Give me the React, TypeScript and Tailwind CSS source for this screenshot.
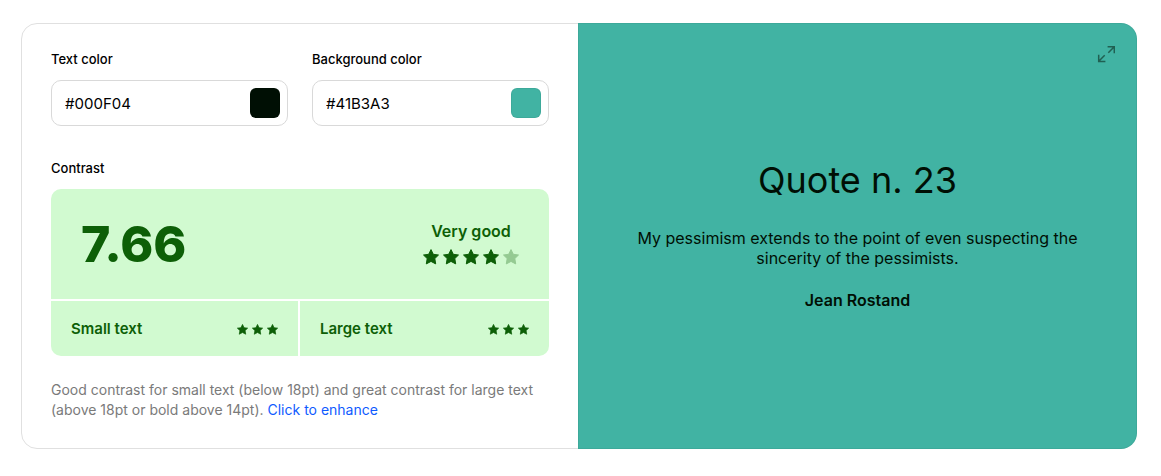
import { useState } from "react";

type ColorFieldProps = {
  id: string;
  label: string;
  value: string;
  onChange: (value: string) => void;
};

function ColorField({ id, label, value, onChange }: ColorFieldProps) {
  return (
    <div className="min-w-0 flex-1">
      <label htmlFor={id} className="block text-[13px] leading-4 font-medium text-black">
        {label}
      </label>
      <div className="mt-[13px] flex h-[46px] items-center rounded-[10px] border border-[#d9d9d9] bg-white pr-[7px] pl-[13px]">
        <input
          id={id}
          type="text"
          value={value}
          onChange={(event) => onChange(event.target.value)}
          className="min-w-0 flex-1 bg-transparent pt-0.5 text-[15px] leading-5 text-black outline-none"
        />
        <button
          type="button"
          aria-label={`Pick ${label.toLowerCase()}`}
          className="size-[30px] shrink-0 rounded-md border border-black/5"
          style={{ backgroundColor: value }}
        />
      </div>
    </div>
  );
}

function Star({ className }: { className: string }) {
  return (
    <svg viewBox="0 0 16 16" fill="currentColor" aria-hidden="true" className={className}>
      <path
        d="M8 .6 10.3 5.3 15.5 6 11.8 9.6 12.7 14.9 8 12.4 3.3 14.9 4.2 9.6.5 6 5.7 5.3Z"
        stroke="currentColor"
        strokeWidth="1"
        strokeLinejoin="round"
      />
    </svg>
  );
}

function SizeRating({ label }: { label: string }) {
  return (
    <div className="flex h-[55px] items-center justify-between bg-[#d1fad0] px-5">
      <span className="text-[15px] leading-5 font-semibold">{label}</span>
      <span className="mt-0.5 flex gap-1">
        <Star className="size-[11px]" />
        <Star className="size-[11px]" />
        <Star className="size-[11px]" />
      </span>
    </div>
  );
}

export default function App() {
  const [textColor, setTextColor] = useState("#000F04");
  const [backgroundColor, setBackgroundColor] = useState("#41B3A3");

  return (
    <main className="bg-white pt-[23px] pr-6 pb-[27px] pl-[21px] font-['Inter',sans-serif]">
      <div className="grid grid-cols-2">
        <section className="rounded-l-2xl border border-[#e0e0e0] px-[29px] pt-[27px] pb-7">
          <div className="flex gap-6">
            <ColorField id="text-color" label="Text color" value={textColor} onChange={setTextColor} />
            <ColorField
              id="background-color"
              label="Background color"
              value={backgroundColor}
              onChange={setBackgroundColor}
            />
          </div>

          <h2 className="mt-[34px] text-[13px] leading-4 font-medium text-black">Contrast</h2>
          <div className="mt-[13px] grid gap-0.5 overflow-hidden rounded-[10px] text-[#0d5f07]">
            <div className="flex h-[110px] items-center justify-between bg-[#d1fad0] px-[30px]">
              <strong className="text-[50px] leading-none font-extrabold">7.66</strong>
              <div className="text-center">
                <div className="text-base leading-5 font-semibold">Very good</div>
                <div className="mt-2 mb-0.5 flex gap-1">
                  <Star className="size-4" />
                  <Star className="size-4" />
                  <Star className="size-4" />
                  <Star className="size-4" />
                  <Star className="size-4 opacity-30" />
                </div>
              </div>
            </div>
            <div className="grid grid-cols-[247fr_249fr] gap-0.5">
              <SizeRating label="Small text" />
              <SizeRating label="Large text" />
            </div>
          </div>

          <p className="mt-6 text-sm leading-5 text-[#7a7a7a]">
            Good contrast for small text (below 18pt) and great contrast for large text (above 18pt
            or bold above 14pt).{" "}
            <a href="#enhance" className="text-[#0f5bff]">
              Click to enhance
            </a>
          </p>
        </section>

        <section
          className="relative -ml-px flex flex-col items-center justify-center rounded-r-2xl border border-black/5 px-12 pb-0.5 text-center"
          style={{ backgroundColor, color: textColor }}
        >
          <button type="button" aria-label="Full screen" className="absolute top-[21px] right-[21px] opacity-50">
            <svg viewBox="0 0 18 18" fill="none" stroke="currentColor" strokeWidth="1.5" className="size-[18px]">
              <path d="M10.6 1.7h6.7v6.6M17 2l-5.7 5.7M1.7 9.8v6.6h6.7M2 16l5.7-5.7" />
            </svg>
          </button>
          <h1 className="text-4xl leading-10">Quote n. 23</h1>
          <p className="mt-7 text-base leading-5">
            My pessimism extends to the point of even suspecting the sincerity of the pessimists.
          </p>
          <p className="mt-[22px] text-base leading-5 font-semibold">Jean Rostand</p>
        </section>
      </div>
    </main>
  );
}
